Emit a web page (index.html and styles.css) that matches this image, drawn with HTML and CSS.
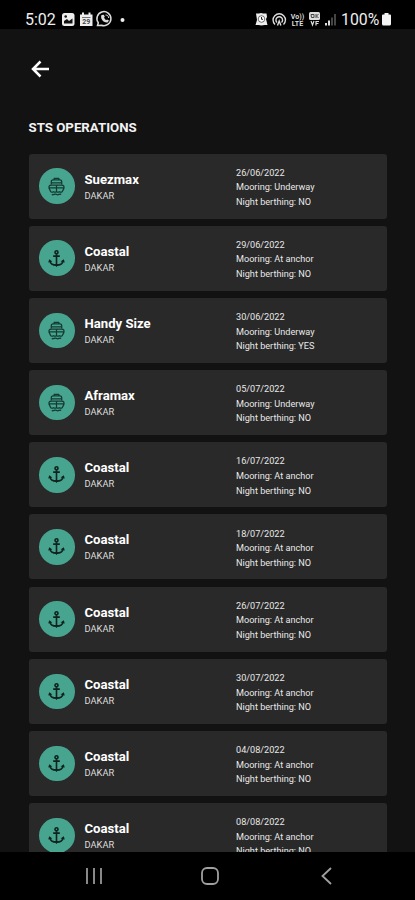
FILE: index.html
```html
<!DOCTYPE html>
<html lang="en">
<head>
    <meta charset="UTF-8">
    <meta name="viewport" content="width=device-width, initial-scale=1.0">
    <title>STS Operations</title>
    <link rel="stylesheet" href="styles.css">
</head>
<body>
    <svg class="sprites">
        <symbol id="ship" viewBox="0 0 20 20">
            <g fill="none" stroke="#143a32" stroke-width="1.3" stroke-linejoin="round">
                <path d="M7.500 3V1.500h5V3M4.500 8V5q0-2 2-2h7q2 0 2 2v3M4.500 6.200h11"/>
                <path d="M10 8.500v7M2.200 12q-.7-3.500 2.300-3.500h11q3 0 2.300 3.500L16 15.500q-1.500 1-3 0-1.500 1-3 0-1.500 1-3 0-1.500 1-3 0zM2.500 11.500h15"/>
                <path d="M5 18.300q1.300.8 2.500 0 1.300-.8 2.500 0 1.300.8 2.500 0 1.300-.8 2.500 0"/>
            </g>
        </symbol>
        <symbol id="anchor" viewBox="0 0 20 20">
            <g fill="none" stroke="#10231f" stroke-width="1.7">
                <circle cx="10" cy="3.500" r="1.600"/>
                <path d="M10 5.500v12M6.500 7.500h7M3 12.500c.5 3 3.500 4.500 7 4.500s6.500-1.500 7-4.500"/>
            </g>
            <path fill="#10231f" d="M1.300 14.300 2.300 10.800 5.700 13.200zM18.700 14.300l-1-3.500-3.400 2.400zM8 16.500h4L10 19z"/>
        </symbol>
    </svg>

    <div class="phone">
        <div class="status-bar">
            <span class="clock">5:02</span>
            <svg class="notifications" width="66" height="18" viewBox="0 0 66 18">
                <rect x="1" y="3" width="12.500" height="13" rx="2.500" fill="#eee"/>
                <path d="M3 13.500V11l3-2 2 2 3.500-2.500v5z" fill="#111"/>
                <circle cx="4.700" cy="6.500" r="1.300" fill="#111"/>
                <path d="M19 4.500h12.500V16H19zM21 2.500h2v3h-2zM27.500 2.500h2v3h-2z" fill="#eee"/>
                <path d="M21 7.500h8.500" stroke="#777"/>
                <text x="25.200" y="14" class="tiny dark">29</text>
                <path d="M36.500 15.500l.8-2.700A7 7 0 1 1 40.500 15.200z" fill="none" stroke="#ddd" stroke-width="1.500"/>
                <path d="M40.500 5c-1.500 3 1.500 8 6 7.500l1.500-2-2-1-1 .8-2-2.500.8-1-1-2z" fill="#ddd"/>
                <path d="M44.500 5c2 0 3 1 3.200 3" fill="none" stroke="#ddd"/>
                <circle cx="61.500" cy="10" r="2" fill="#eee"/>
            </svg>
            <svg class="system" width="86" height="18" viewBox="0 0 86 18">
                <path d="M1 3.500h3l2-.5 2 .5h3.500L12 7l-1 2 1.500 6H9.500l-3 .5-3-.5H.5L2 10z" fill="#eee"/>
                <circle cx="6.500" cy="9" r="3.300" fill="#fff" stroke="#333" stroke-width=".7"/>
                <path d="M6.500 7v2.300H8" fill="none" stroke="#222"/>
                <g fill="none" stroke="#ddd" stroke-width="1.400">
                    <path d="M20 14.500a6.200 6.200 0 1 1 8.500 0"/>
                    <path d="M22 12.500a3.300 3.300 0 1 1 4.500 0"/>
                    <path d="M22.500 15.500l1.700-4.500 1.700 4.500"/>
                </g>
                <text x="42.500" y="8.700" class="tiny">Vo))</text>
                <text x="42.500" y="15.700" class="tiny">LTE</text>
                <rect x="54" y="2" width="11" height="8" rx="1.500" fill="#ddd"/>
                <path d="M56 4.500h3v3h-2.500zM61 4v4M63.500 4l-2 2 2 2" fill="none" stroke="#444"/>
                <path d="M56 11l1.500 4 1.500-4M61 15.500v-4h3M61 13.500h2.500" fill="none" stroke="#ddd" stroke-width="1.200"/>
                <path d="M70 13h2v2.500h-2zM73 10.500h2v5h-2z" fill="#ddd"/>
                <path d="M76 7.500h2v8h-2zM79 4h2v11.500h-2z" fill="#454545"/>
            </svg>
            <span class="percent">100%</span>
            <svg class="battery" width="9" height="13" viewBox="0 0 9 13">
                <path d="M2.500 0h4v1.500H8q1 0 1 1V11q0 1.500-1.500 1.500h-6Q0 12.500 0 11V2.500q0-1 1-1h1.500z" fill="#f4f4f4"/>
            </svg>
        </div>

        <div class="screen">
            <svg class="back" width="19" height="18" viewBox="0 0 19 18">
                <path d="M9.500 1.500L2 9l7.500 7.500M2.500 9H18" fill="none" stroke="#fff" stroke-width="2.500"/>
            </svg>
            <h1>STS OPERATIONS</h1>
            <div id="operations" class="operations"></div>
        </div>

        <div class="nav-bar">
            <svg width="18" height="18" viewBox="0 0 18 18"><path d="M2 1v16M9 1v16M16 1v16" stroke="#a0a0a0" stroke-width="1.700"/></svg>
            <svg width="18" height="18" viewBox="0 0 18 18"><rect x="1" y="1" width="16" height="16" rx="5" fill="none" stroke="#a0a0a0" stroke-width="1.800"/></svg>
            <svg width="18" height="18" viewBox="0 0 18 18"><path d="M14 1L5.500 9l8.500 8" fill="none" stroke="#a0a0a0" stroke-width="1.800"/></svg>
        </div>
    </div>
    <script>
        const operations = [
            ['Suezmax', '26/06/2022', 'Underway', 'NO'],
            ['Coastal', '29/06/2022', 'At anchor', 'NO'],
            ['Handy Size', '30/06/2022', 'Underway', 'YES'],
            ['Aframax', '05/07/2022', 'Underway', 'NO'],
            ['Coastal', '16/07/2022', 'At anchor', 'NO'],
            ['Coastal', '18/07/2022', 'At anchor', 'NO'],
            ['Coastal', '26/07/2022', 'At anchor', 'NO'],
            ['Coastal', '30/07/2022', 'At anchor', 'NO'],
            ['Coastal', '04/08/2022', 'At anchor', 'NO'],
            ['Coastal', '08/08/2022', 'At anchor', 'NO']
        ];

        document.getElementById('operations').innerHTML = operations.map(([name, date, mooring, night]) => `
            <div class="card">
                <div class="icon"><svg><use href="#${mooring === 'Underway' ? 'ship' : 'anchor'}"/></svg></div>
                <div class="vessel">
                    <h2>${name}</h2>
                    <p>DAKAR</p>
                </div>
                <div class="details">
                    <p>${date}</p>
                    <p>Mooring: ${mooring}</p>
                    <p>Night berthing: ${night}</p>
                </div>
            </div>`).join('');
    </script>
</body>
</html>
```
FILE: styles.css
```css
* {
    box-sizing: border-box;
}

body {
    margin: 0;
    background: #000;
    color: #fff;
    font-family: Roboto, Arial, sans-serif;
}

h1, h2, p {
    margin: 0;
}

.sprites {
    display: none;
}

.phone {
    width: 415px;
    height: 900px;
    display: flex;
    flex-direction: column;
    overflow: hidden;
}

.status-bar {
    height: 29px;
    flex: none;
    display: flex;
    align-items: center;
    padding: 9px 24px 0 25px;
    color: #eee;
}

.clock {
    width: 36px;
    font-size: 16px;
}

.system {
    margin-left: auto;
}

.percent {
    width: 41px;
    font-size: 15.8px;
}

.tiny {
    font-size: 7px;
    font-weight: bold;
    fill: #ddd;
    text-anchor: middle;
}

.dark {
    fill: #444;
}

.screen {
    flex: 1;
    min-height: 0;
    overflow: hidden;
    padding: 31px 28px 0 28.5px;
    background: #121212;
}

.back {
    display: block;
    margin-left: 2.5px;
}

h1 {
    margin-top: 42px;
    font-size: 13.25px;
    line-height: 16px;
    color: #f2f2f2;
}

.operations {
    display: flex;
    flex-direction: column;
    gap: 7.2px;
    margin-top: 17.5px;
}

.card {
    height: 65px;
    flex: none;
    display: flex;
    align-items: center;
    padding-left: 10.5px;
    background: #292929;
    border-radius: 3px;
}

.icon {
    width: 35.5px;
    height: 35.5px;
    display: flex;
    align-items: center;
    justify-content: center;
    border-radius: 50%;
    background: #47a48f;
}

.icon svg {
    width: 19px;
    height: 19px;
}

.vessel {
    width: 151.5px;
    margin-left: 10px;
    padding-top: 2px;
}

.vessel h2 {
    font-size: 13.15px;
    line-height: 17px;
}

.vessel p {
    font-size: 9.3px;
    line-height: 16px;
    color: #ddd;
}

.details {
    padding-top: 3px;
    font-size: 9.15px;
    line-height: 14.6px;
    color: #e8e8e8;
}

.nav-bar {
    height: 48px;
    flex: none;
    display: flex;
    justify-content: space-between;
    align-items: center;
    padding: 0 80px 0 85px;
}
```
